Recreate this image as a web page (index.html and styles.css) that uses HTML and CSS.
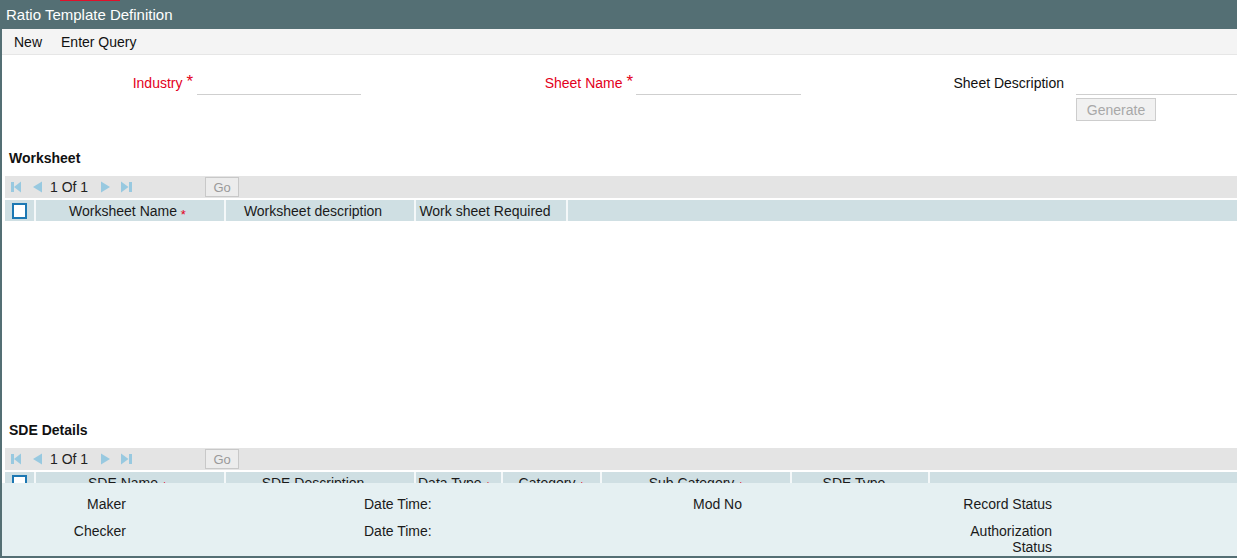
FILE: index.html
```html
<!DOCTYPE html>
<html lang="en">

<head>
    <meta charset="UTF-8">
    <meta name="viewport" content="width=device-width, initial-scale=1.0">
    <title>Ratio Template Definition</title>
    <link rel="stylesheet" href="styles.css">
</head>

<body>
    <div class="window">
        <div class="title-bar">
            <span class="title-mark"></span>
            <h1>Ratio Template Definition</h1>
        </div>

        <div class="toolbar">
            <a href="#" class="tool">New</a>
            <a href="#" class="tool">Enter Query</a>
        </div>

        <div class="content">
            <form class="head-form">
                <label class="field-label">Industry <span class="req">*</span></label>
                <input type="text" class="line-input">
                <label class="field-label pad-3">Sheet Name <span class="req">*</span></label>
                <input type="text" class="line-input">
                <label class="field-label plain pad-12">Sheet Description</label>
                <input type="text" class="line-input">
                <button type="button" class="btn-generate" disabled>Generate</button>
            </form>

            <div class="section">
                <h3>Worksheet</h3>
                <div class="pager">
                    <svg class="pg first" width="10" height="12" viewBox="0 0 10 12"><rect x="0" y="1" width="3" height="10"/><polygon points="10,0.5 3,6 10,11.5"/></svg>
                    <svg class="pg prev" width="10" height="12" viewBox="0 0 10 12"><polygon points="10,0.5 1,6 10,11.5"/></svg>
                    <span class="pg-text">1 Of 1</span>
                    <svg class="pg next" width="10" height="12" viewBox="0 0 10 12"><polygon points="0,0.5 9,6 0,11.5"/></svg>
                    <svg class="pg last" width="11" height="12" viewBox="0 0 11 12"><polygon points="0,0.5 7.5,6 0,11.5"/><rect x="8" y="1" width="3" height="10"/></svg>
                    <button type="button" class="btn-go" disabled>Go</button>
                </div>
                <div class="grid-head">
                    <div class="cell check-cell"><span class="checkbox"></span></div>
                    <div class="cell w190 pr5">Worksheet Name <span class="req-sm">*</span></div>
                    <div class="cell w190 pr14">Worksheet description</div>
                    <div class="cell w152 pr12">Work sheet Required</div>
                </div>
                <div class="grid-body"></div>
            </div>

            <div class="section">
                <h3>SDE Details</h3>
                <div class="pager">
                    <svg class="pg first" width="10" height="12" viewBox="0 0 10 12"><rect x="0" y="1" width="3" height="10"/><polygon points="10,0.5 3,6 10,11.5"/></svg>
                    <svg class="pg prev" width="10" height="12" viewBox="0 0 10 12"><polygon points="10,0.5 1,6 10,11.5"/></svg>
                    <span class="pg-text">1 Of 1</span>
                    <svg class="pg next" width="10" height="12" viewBox="0 0 10 12"><polygon points="0,0.5 9,6 0,11.5"/></svg>
                    <svg class="pg last" width="11" height="12" viewBox="0 0 11 12"><polygon points="0,0.5 7.5,6 0,11.5"/><rect x="8" y="1" width="3" height="10"/></svg>
                    <button type="button" class="btn-go" disabled>Go</button>
                </div>
                <div class="grid-head">
                    <div class="cell check-cell"><span class="checkbox"></span></div>
                    <div class="cell w190 pr5">SDE Name <span class="req-sm">*</span></div>
                    <div class="cell w190 pr14">SDE Description</div>
                    <div class="cell w87 left">Data Type <span class="req-sm">*</span></div>
                    <div class="cell w99">Category <span class="req-sm">*</span></div>
                    <div class="cell w190">Sub Category <span class="req-sm">*</span></div>
                    <div class="cell w138 pr12">SDE Type</div>
                </div>
            </div>
        </div>

        <div class="audit">
            <span class="a-label">Maker</span>
            <span></span>
            <span class="a-text">Date Time:</span>
            <span class="a-text">Mod No</span>
            <span class="a-label">Record Status</span>
            <span></span>

            <span class="a-label">Checker</span>
            <span></span>
            <span class="a-text">Date Time:</span>
            <span></span>
            <span class="a-label">Authorization<br>Status</span>
            <span></span>
        </div>
    </div>
</body>

</html>
```

FILE: styles.css
```css
*{
    box-sizing: border-box;
    padding: 0;
    margin: 0;
}

body{
    font-family: "Liberation Sans", Arial, sans-serif;
    font-size: 14px;
    color: #1a1a1a;
    background-color: white;
}

.window{
    display: flex;
    flex-direction: column;
    height: 100vh;
    border-left: 2px solid #546f74;
    border-bottom: 2px solid #546f74;
    overflow: hidden;
}

.title-bar{
    position: relative;
    height: 29px;
    flex-shrink: 0;
    background-color: #546f74;
    padding-left: 4px;
    margin-left: -2px;
}

.title-bar h1{
    font-size: 15px;
    font-weight: normal;
    line-height: 29px;
    color: white;
    padding-left: 2px;
}

.title-mark{
    position: absolute;
    top: 0;
    left: 60px;
    width: 60px;
    height: 1px;
    background-color: #e0102a;
}

.toolbar{
    display: flex;
    gap: 19px;
    height: 26px;
    flex-shrink: 0;
    align-items: center;
    padding-left: 12px;
    background-color: #f4f4f4;
    border-bottom: 1px solid #e6e6e6;
}

.tool{
    text-decoration: none;
    color: #111;
}

.content{
    flex: 1;
    overflow: hidden;
}

.head-form{
    display: grid;
    grid-template-columns: 195px 164px 275px 165px 275px 1fr;
    row-gap: 3px;
    padding-top: 17px;
    margin-bottom: 27px;
}

.field-label{
    text-align: right;
    line-height: 23px;
    height: 23px;
    padding-right: 4px;
    color: #e3001b;
    white-space: nowrap;
}

.field-label.plain{
    color: #111;
}

.pad-3{
    padding-right: 3px;
}

.pad-12{
    padding-right: 12px;
}

.req{
    font-size: 17px;
    vertical-align: top;
    line-height: 20px;
}

.line-input{
    height: 23px;
    border: none;
    border-bottom: 1px solid #cfcfcf;
    outline: none;
    background: transparent;
}

.btn-generate{
    grid-column: 6;
    justify-self: start;
    width: 80px;
    height: 23px;
    font-family: inherit;
    font-size: 14px;
    color: #a8a8a8;
    background-color: #f1f1f1;
    border: 1px solid #cdcdcd;
}

.section h3{
    font-size: 14px;
    line-height: 20px;
    padding-left: 7px;
    margin-bottom: 8px;
    color: #111;
}

.pager{
    display: flex;
    align-items: center;
    height: 22px;
    margin-left: 3px;
    margin-bottom: 2px;
    padding-left: 6px;
    background-color: #e4e4e4;
}

.pg{
    fill: #98c9e0;
}

.prev{
    margin-left: 11px;
}

.pg-text{
    margin-left: 8px;
    color: #222;
}

.next{
    margin-left: 13px;
}

.last{
    margin-left: 10px;
}

.btn-go{
    margin-left: 73px;
    width: 34px;
    height: 20px;
    font-family: inherit;
    font-size: 13px;
    color: #9a9a9a;
    background-color: #ececec;
    border: 1px solid #c8c8c8;
}

.grid-head{
    display: flex;
    height: 21px;
    margin-left: 3px;
    background-color: #cfdfe3;
}

.cell{
    line-height: 22px;
    text-align: center;
    white-space: nowrap;
    border-right: 2px solid #f4f8f9;
    color: #1a1a1a;
}

.check-cell{
    width: 31px;
    display: flex;
    align-items: center;
    padding-left: 7px;
}

.checkbox{
    width: 15px;
    height: 16px;
    border: 2px solid #1c78b3;
    background-color: white;
}

.w190{
    width: 190px;
}

.w152{
    width: 152px;
}

.w87{
    width: 87px;
}

.w99{
    width: 99px;
}

.w138{
    width: 138px;
}

.pr5{
    padding-right: 5px;
}

.pr12{
    padding-right: 12px;
}

.pr14{
    padding-right: 14px;
}

.left{
    text-align: left;
    padding-left: 2px;
}

.req-sm{
    color: #e3001b;
    font-size: 13px;
    vertical-align: -3px;
}

.grid-body{
    height: 199px;
}

.audit{
    display: grid;
    grid-template-columns: 124px 238px 329px 160px 199px 1fr;
    row-gap: 9px;
    height: 73px;
    flex-shrink: 0;
    padding-top: 13px;
    line-height: 16px;
    background-color: #e5f0f2;
    color: #1a1a1a;
}

.a-label{
    text-align: right;
}
```
